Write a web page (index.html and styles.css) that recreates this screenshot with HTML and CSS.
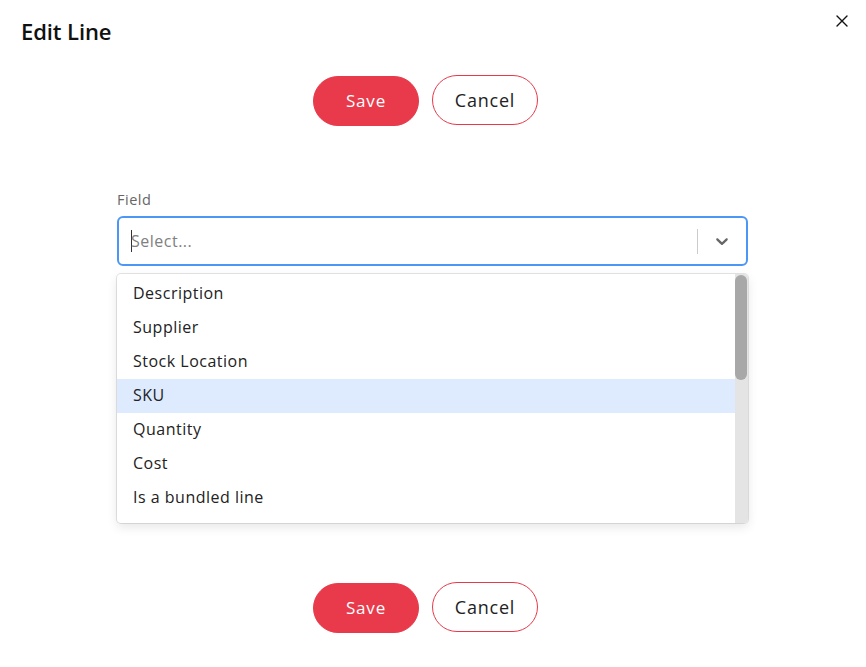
FILE: index.html
```html
<!DOCTYPE html>
<html>
<head>
<meta charset="utf-8">
<link rel="stylesheet" href="styles.css">
</head>
<body>
<div class="modal">
  <header class="modal-header">
    <h1 class="title">Edit Line</h1>
    <button class="close" aria-label="Close">
      <svg width="12" height="12" viewBox="0 0 12 12"><path d="M1 1L11 11M11 1L1 11" stroke="#111" stroke-width="1.4" stroke-linecap="round"/></svg>
    </button>
  </header>
  <div class="actions top">
    <button class="btn btn-save">Save</button>
    <button class="btn btn-cancel">Cancel</button>
  </div>
  <section class="form">
    <label class="label">Field</label>
    <div class="select">
      <div class="control">
        <div class="value"><span class="caret"></span><span class="placeholder">Select...</span></div>
        <div class="indicators">
          <span class="sep"></span>
          <span class="chev">
            <svg width="20" height="20" viewBox="0 0 20 20"><path fill="#666" d="M4.516 7.548c0.436-0.446 1.043-0.481 1.576 0l3.908 3.747 3.908-3.747c0.533-0.481 1.141-0.446 1.574 0 0.436 0.445 0.408 1.197 0 1.615-0.406 0.418-4.695 4.502-4.695 4.502-0.217 0.223-0.502 0.335-0.787 0.335s-0.57-0.112-0.789-0.335c0 0-4.287-4.084-4.695-4.502s-0.436-1.17 0-1.615z"/></svg>
          </span>
        </div>
      </div>
      <div class="menu">
        <ul class="menu-list">
          <li class="option">Description</li>
          <li class="option">Supplier</li>
          <li class="option">Stock Location</li>
          <li class="option focused">SKU</li>
          <li class="option">Quantity</li>
          <li class="option">Cost</li>
          <li class="option">Is a bundled line</li>
          <li class="option">unit of sale</li>
        </ul>
        <div class="scrollbar"><div class="thumb"></div></div>
      </div>
    </div>
  </section>
  <div class="actions bottom">
    <button class="btn btn-save">Save</button>
    <button class="btn btn-cancel">Cancel</button>
  </div>
</div>
</body>
</html>
```
FILE: styles.css
```css
* { box-sizing: border-box; }
html, body { margin: 0; padding: 0; background: #fff; }
body {
  font-family: "Open Sans", "Noto Sans", sans-serif;
  color: #222;
  width: 866px;
  height: 667px;
  overflow: hidden;
}
.modal { display: flex; flex-direction: column; }
.modal-header {
  display: flex;
  justify-content: space-between;
  align-items: flex-start;
  padding: 15px 18px 0 21px;
  height: 75px;
}
.title {
  margin: 0;
  font-size: 22px;
  font-weight: 600;
  line-height: 32px;
  color: #111;
  letter-spacing: -0.1px;
}
.close {
  border: 0;
  background: none;
  padding: 0;
  margin-top: 0;
  width: 12px;
  height: 12px;
  display: flex;
  cursor: pointer;
}
.actions {
  display: flex;
  justify-content: center;
  gap: 13px;
  padding-right: 15px;
}
.btn {
  width: 106px;
  height: 50px;
  border-radius: 25px;
  font-family: inherit;
  cursor: pointer;
  line-height: 1;
}
.btn-save {
  background: #e83a4b;
  border: 1px solid #e83a4b;
  color: #fff;
  font-weight: 500;
  font-size: 17px;
  letter-spacing: 0.8px;
  margin-top: 1px;
  padding-bottom: 3px;
}
.btn-cancel {
  background: #fff;
  border: 1px solid #e8394a;
  color: #222;
  font-weight: 400;
  font-size: 18px;
  letter-spacing: 0.8px;
  padding-bottom: 1px;
}
.form {
  padding: 64px 0 0 117px;
  width: 749px;
  height: 456px;
}
.label {
  display: block;
  font-size: 14.5px;
  color: #666;
  line-height: 20px;
  letter-spacing: 0.5px;
  margin-bottom: 6px;
}
.select { position: relative; }
.control {
  display: flex;
  align-items: center;
  height: 50px;
  width: 631px;
  border: 2px solid #4c97f5;
  border-radius: 6px;
  background: #fff;
}
.value {
  flex: 1;
  display: flex;
  align-items: center;
  padding-left: 12px;
}
.caret {
  width: 1px;
  height: 22px;
  background: #333;
  margin-right: -1px;
}
.placeholder {
  color: #808080;
  font-size: 16px;
  letter-spacing: 0.5px;
}
.indicators { display: flex; align-items: center; height: 100%; }
.sep {
  width: 1px;
  height: 25px;
  background: #ccc;
}
.chev {
  display: flex;
  padding: 0 14px 0 14px;
}
.menu {
  position: absolute;
  top: 58px;
  left: 0;
  width: 631px;
  height: 249px;
  background: #fff;
  border-radius: 4px;
  box-shadow: 0 0 0 1px rgba(0,0,0,0.1), 0 4px 11px rgba(0,0,0,0.1);
  overflow: hidden;
  display: flex;
}
.menu-list {
  flex: 1;
  list-style: none;
  margin: 0;
  padding: 3px 0 0;
  overflow: hidden;
}
.scrollbar {
  width: 13px;
  background: #e4e4e4;
  padding: 1px 1px 0 0;
}
.thumb {
  height: 105px;
  background: #a8a8a8;
  border-radius: 6px;
}
.option {
  height: 34px;
  line-height: 32px;
  padding: 0 16px;
  font-size: 16px;
  letter-spacing: 0.5px;
  color: #222;
  white-space: nowrap;
}
.option.focused { background: #deebff; }
```
